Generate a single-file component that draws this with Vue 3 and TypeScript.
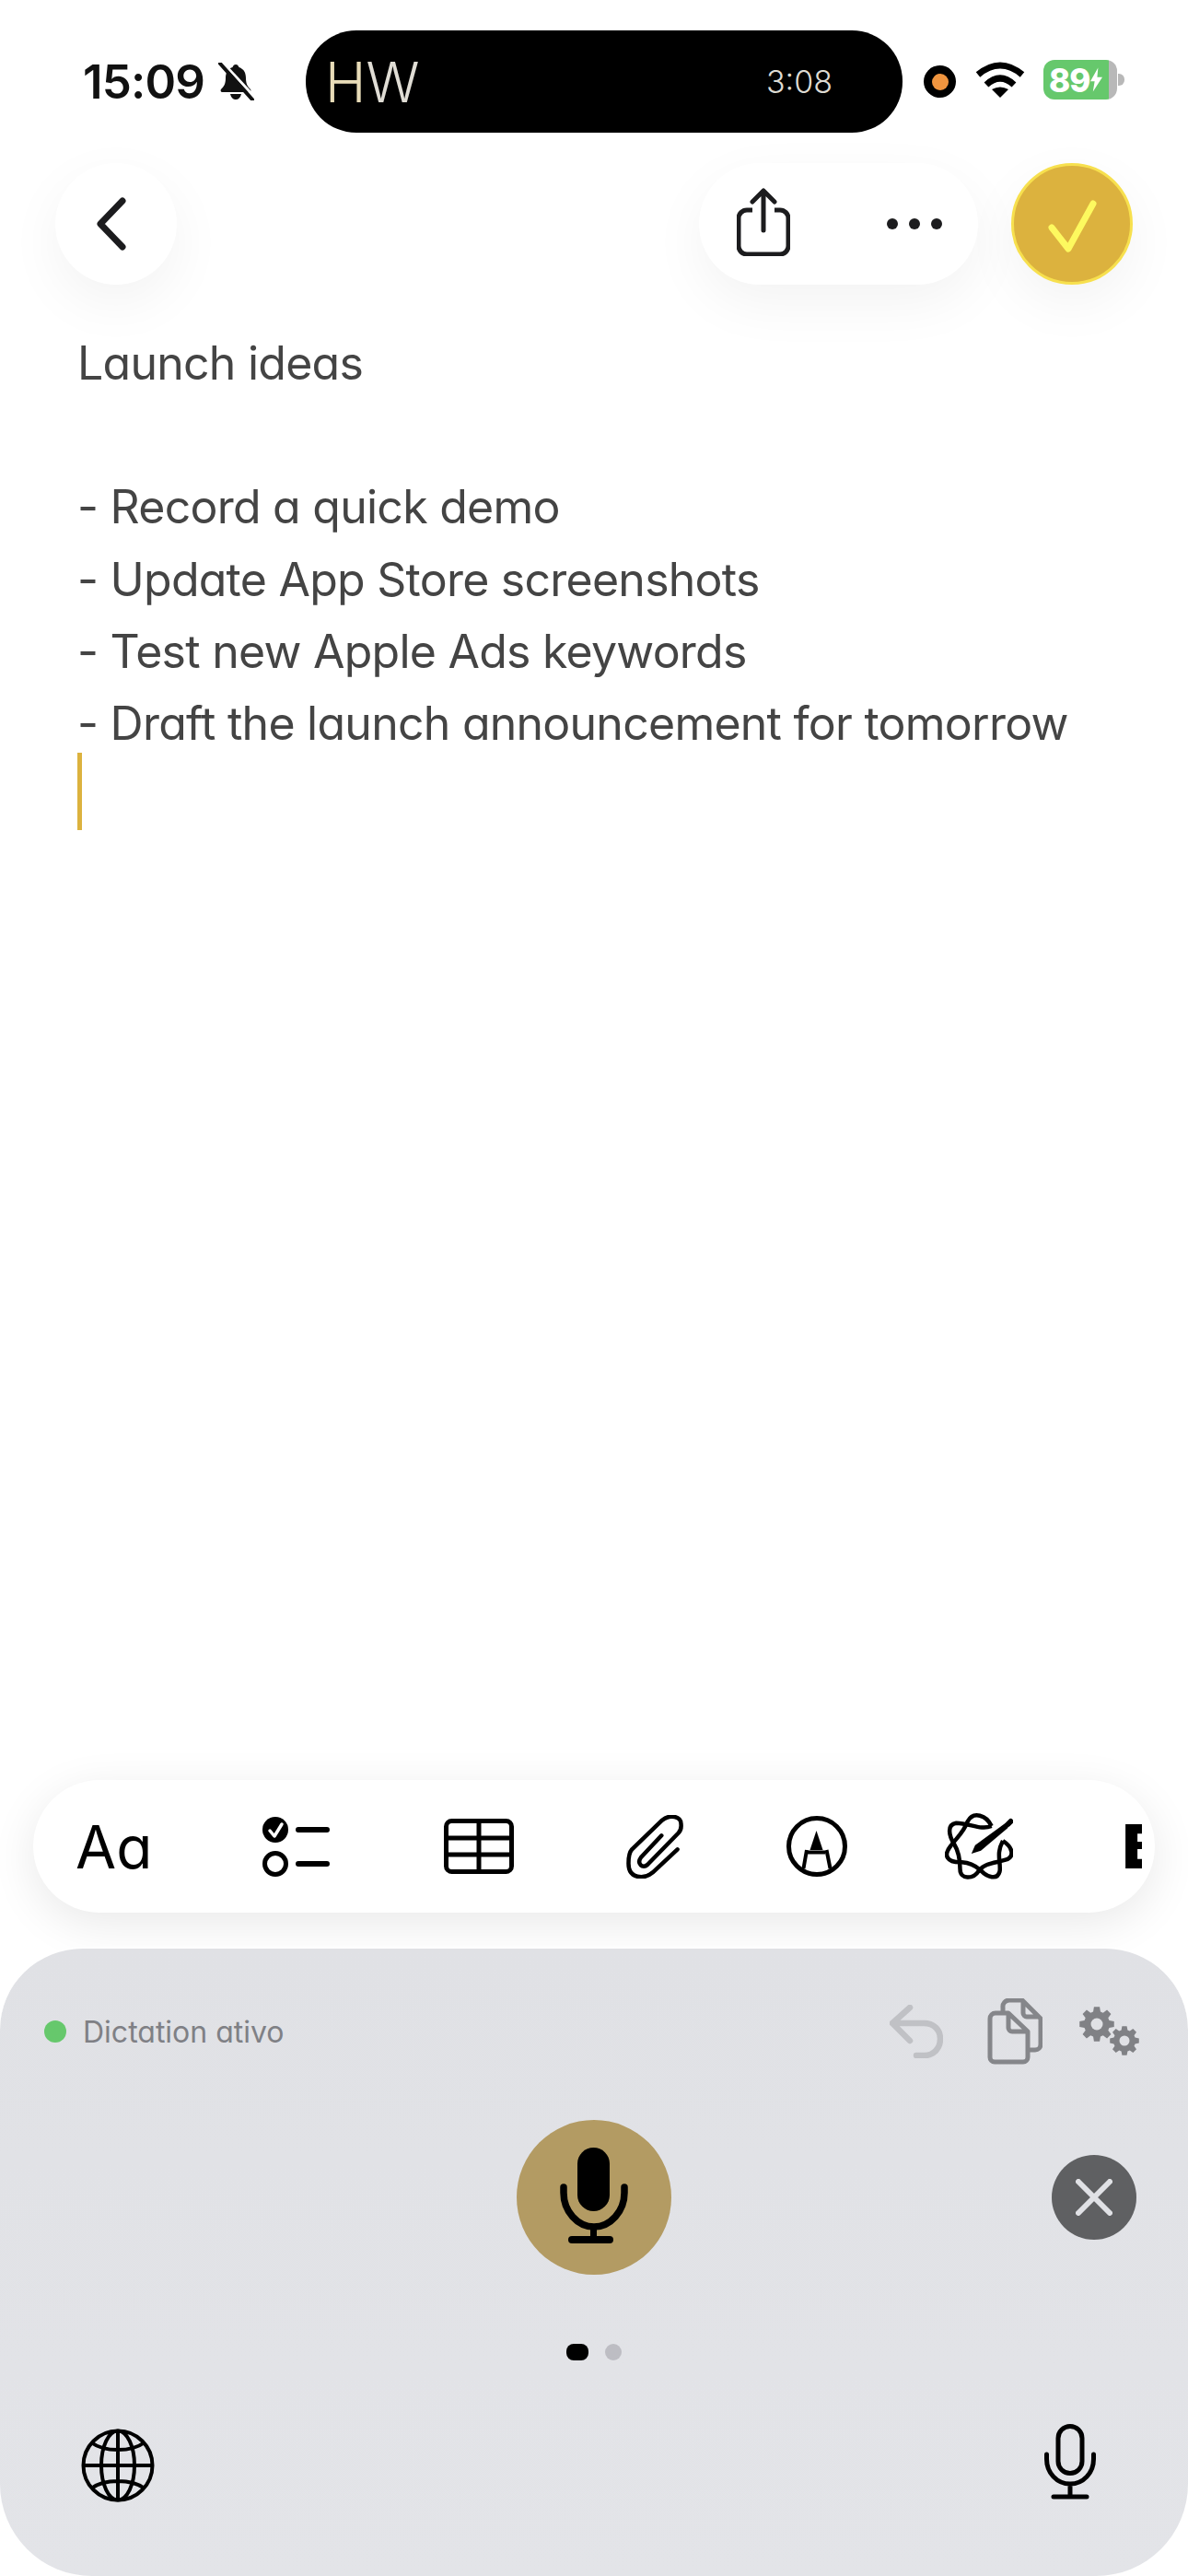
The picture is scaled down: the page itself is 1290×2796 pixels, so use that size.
<template>
  <div class="screen">
    <div class="status">
      <span class="time">15:09</span>
      <svg class="bell" viewBox="0 0 39 41">
        <path d="M19 2c-2 0-3 1.500-3.500 3C10 7 8 11 8 17c0 6-2 9-5 12-1 1.500 0 3 1.500 3h29c1.500 0 2.500-1.500 1.500-3-3-3-5-6-5-12 0-6-2-10-7.500-12C22 3.500 21 2 19 2z" fill="#111" />
        <path d="M13 34h12c-1 4-3 6-6 6s-5-2-6-6z" fill="#111" />
        <path d="M6 1l35 38" stroke="#fff" stroke-width="3" />
        <path d="M2 1l35 39" stroke="#111" stroke-width="4" stroke-linecap="round" />
      </svg>
      <div class="island">
        <span class="island-title"><span class="first">H</span>W</span>
        <span class="island-time">3:08</span>
      </div>
      <div class="rec"><span class="rec-inner"></span></div>
      <svg class="wifi" viewBox="0 0 54 40">
        <path d="M3 15Q27-5 51 15" fill="none" stroke="#000" stroke-width="7" />
        <path d="M12 26Q27 12 42 26" fill="none" stroke="#000" stroke-width="7" />
        <path d="M18 31Q27 26 36 31L27 40z" fill="#000" />
      </svg>
      <div class="battery" :style="{ background: batteryFill }">
        <span class="battery-num">89</span>
        <svg class="bolt" viewBox="0 0 14 28">
          <path d="M9 0L0 16h5L3 28l11-17H8z" fill="#fff" />
        </svg>
      </div>
      <span class="battery-nub"></span>
    </div>

    <div class="header">
      <button class="round back">
        <svg width="34" height="58" viewBox="0 0 34 58">
          <path d="M29 4L5 29l24 25" fill="none" stroke="#1c1c1e" stroke-width="7" stroke-linecap="round" stroke-linejoin="round" />
        </svg>
      </button>
      <div class="pill">
        <svg width="58" height="74" viewBox="0 0 58 74">
          <path d="M17 24h-6a9 9 0 0 0-9 9v30a9 9 0 0 0 9 9h36a9 9 0 0 0 9-9V33a9 9 0 0 0-9-9h-6" fill="none" stroke="#1c1c1e" stroke-width="5" />
          <path d="M29 46V4M17 15L29 3l12 12" fill="none" stroke="#1c1c1e" stroke-width="5" stroke-linecap="round" stroke-linejoin="round" />
        </svg>
        <div class="dots"><span></span><span></span><span></span></div>
      </div>
      <button class="round done">
        <svg width="62" height="62" viewBox="0 0 62 62">
          <path d="M10 35l18 23L55 9" fill="none" stroke="#fdf95f" stroke-width="7" stroke-linecap="round" stroke-linejoin="round" />
        </svg>
      </button>
    </div>

    <div class="note">
      <div v-for="(line, i) in noteLines" :key="i" class="note-line">{{ line }}</div>
      <div class="caret"></div>
    </div>

    <div class="toolbar">
      <span class="tool-aa">Aɑ</span>
      <svg class="tool-check" width="73" height="66" viewBox="0 0 73 66">
        <circle cx="14" cy="15" r="14" fill="#000" />
        <path d="M8 16l5 6 8-13" fill="none" stroke="#fff" stroke-width="3.500" stroke-linecap="round" stroke-linejoin="round" />
        <circle cx="14" cy="52" r="11.500" fill="none" stroke="#000" stroke-width="5" />
        <path d="M39 15h31M39 52h31" stroke="#000" stroke-width="6" stroke-linecap="round" />
      </svg>
      <svg class="tool-table" width="76" height="60" viewBox="0 0 76 60">
        <rect x="2.500" y="2.500" width="71" height="55" rx="6" fill="none" stroke="#000" stroke-width="5" />
        <path d="M2 21h72M2 39h72M38 2v56" stroke="#000" stroke-width="5" />
      </svg>
      <svg class="tool-clip" width="62" height="69" viewBox="0 0 62 69">
        <path d="M55.600 37.300L28.800 62.300C20 70 2 70 2.500 52C2.500 46 3 41 6.200 37.300L39 5.700C47-1 60 1 59.500 10C60 14 59 17 56.700 19.500L23 54C18 58.500 11 53 16 46L38.300 22.300" fill="none" stroke="#000" stroke-width="4.500" stroke-linecap="round" stroke-linejoin="round" />
      </svg>
      <svg class="tool-pen" width="66" height="66" viewBox="0 0 66 66">
        <circle cx="33" cy="33" r="30.500" fill="none" stroke="#000" stroke-width="5" />
        <path d="M32.500 16L25.500 37h14z" fill="#000" />
        <path d="M22 37l-3.500 20M43.500 37l4 20M23 39.500h19" fill="none" stroke="#000" stroke-width="4" />
      </svg>
      <svg class="tool-write" width="74" height="72" viewBox="0 0 74 72">
        <path d="M50.600 14C45.300 2.300 30.900-2.700 24.700 9C20.600 20.700 12.300 27.300 6.200 35.700C-2 45.700 2 54 18.500 53.300C30.900 54 37 60.700 39.100 62.300C45.300 69 57.600 74 59.700 62.300C60.500 50.700 55.600 44 63 30" fill="none" stroke="#000" stroke-width="4.500" />
        <path d="M50.600 14C39.100 19 26.700 10.700 12.300 10.700C2 12.300 4.100 24 10.300 34C16.500 44 16.500 54 16.500 60.700C16.500 72.300 30.900 72.300 37 62.300C43.200 54 55.600 54 65.800 50.700C76.100 47.300 74 37.300 63 30" fill="none" stroke="#000" stroke-width="4.500" />
        <path d="M28.800 44L32.900 34.700L65.800 10.700L68.700 15.700L39.100 40.700z" fill="#000" />
        <path d="M68.500 12l3-3" stroke="#000" stroke-width="6" stroke-linecap="round" />
      </svg>
      <span class="tool-bold">B</span>
    </div>

    <div class="panel">
      <div class="panel-top">
        <span class="live-dot"></span>
        <span class="live-text">Dictation ativo</span>
        <svg class="undo" width="58" height="58" viewBox="0 0 58 58">
          <path d="M22 3L3 20l19 19M3 20h34c12 0 18 8 18 17 0 10-7 18-17 18h-9" fill="none" stroke="#c0c1c5" stroke-width="6.500" stroke-linecap="round" stroke-linejoin="round" />
        </svg>
        <svg class="copy" width="60" height="72" viewBox="0 0 60 72">
          <path d="M23 16H9a6 6 0 0 0-6 6v42a5 5 0 0 0 5 5h31a5 5 0 0 0 5-5V36zM23 16v16a4 4 0 0 0 4 4h17" fill="none" stroke="#85868a" stroke-width="5" stroke-linejoin="round" />
          <path d="M17 15v-5a7 7 0 0 1 7-8h14l20 20v28a6 6 0 0 1-6 6h-7M39 3v13a4 4 0 0 0 4 4h14" fill="none" stroke="#85868a" stroke-width="5" stroke-linejoin="round" />
        </svg>
        <svg class="gears" width="66" height="54" viewBox="0 0 66 54">
          <path :d="gearPath(19, 19, 19, 14, 8)" fill="#808185" />
          <circle cx="19" cy="19" r="6.500" fill="#e0e1e5" />
          <path :d="gearPath(49, 37, 16, 12, 8)" fill="#808185" />
          <circle cx="49" cy="37" r="5.500" fill="#e0e1e5" />
        </svg>
      </div>

      <div class="mic-row">
        <div class="mic-round">
          <svg width="74" height="104" viewBox="0 0 74 104">
            <rect x="19" y="0" width="35" height="69" rx="17.500" fill="#000" />
            <path d="M4 43v6c0 20 15 37 33 37s33-17 33-37v-6" fill="none" stroke="#000" stroke-width="7.500" stroke-linecap="round" />
            <path d="M36.500 86v13" stroke="#000" stroke-width="7" />
            <path d="M13 100h41" stroke="#000" stroke-width="8" stroke-linecap="round" />
          </svg>
        </div>
        <button class="close">
          <svg width="40" height="40" viewBox="0 0 40 40">
            <path d="M3 3l34 34M37 3L3 37" stroke="#e0e1e5" stroke-width="6" stroke-linecap="round" />
          </svg>
        </button>
      </div>

      <div class="pager">
        <span class="page active"></span>
        <span class="page"></span>
      </div>

      <div class="panel-bottom">
        <svg class="globe" width="80" height="80" viewBox="0 0 80 80">
          <g fill="none" stroke="#000" stroke-width="4">
            <circle cx="40" cy="40" r="37.500" />
            <ellipse cx="40" cy="40" rx="18" ry="37.500" />
            <path d="M40 2v76M2 40h76M11 15c8 6 18 8 29 8s21-2 29-8M11 65c8-6 18-8 29-8s21 2 29 8" />
          </g>
        </svg>
        <svg width="56" height="82" viewBox="0 0 56 82">
          <rect x="15" y="2.500" width="26" height="51" rx="13" fill="none" stroke="#000" stroke-width="5" />
          <path d="M2.500 33v5c0 15 11 27 25.500 27s25.500-12 25.500-27v-5M28 65v14M10 79h36" fill="none" stroke="#000" stroke-width="5" stroke-linecap="round" />
        </svg>
      </div>
    </div>
  </div>
</template>

<script setup lang="ts">
const noteLines: string[] = [
  'Launch ideas',
  '',
  '- Record a quick demo',
  '- Update App Store screenshots',
  '- Test new Apple Ads keywords',
  '- Draft the launch announcement for tomorrow'
]

const batteryLevel = 89
const batteryFill = `linear-gradient(90deg, #66c86c ${batteryLevel}%, #b8b8b8 ${batteryLevel}%)`

// cog outline with rounded-ish teeth, used by the settings icon
function gearPath(cx: number, cy: number, outer: number, inner: number, teeth: number): string {
  const step = (Math.PI * 2) / teeth
  const pts: string[] = []
  for (let i = 0; i < teeth; i++) {
    const a = i * step
    const offsets: Array<[number, number]> = [
      [-0.28, inner],
      [-0.16, outer],
      [0.16, outer],
      [0.28, inner]
    ]
    for (const [k, r] of offsets) {
      const x = cx + r * Math.cos(a + k * step * 1.3)
      const y = cy + r * Math.sin(a + k * step * 1.3)
      pts.push(`${x.toFixed(2)} ${y.toFixed(2)}`)
    }
  }
  return `M${pts.join('L')}Z`
}
</script>

<style scoped>
.screen {
  width: 1290px;
  height: 2796px;
  display: flex;
  flex-direction: column;
  background: #fff;
  overflow: hidden;
  font-family: Inter, "Liberation Sans", sans-serif;
}

.status {
  display: flex;
  align-items: center;
  height: 111px;
  margin-top: 33px;
  padding-left: 90px;
}

.time {
  width: 132px;
  font-size: 51px;
  font-weight: 600;
  letter-spacing: -0.800px;
  color: #111;
  white-space: nowrap;
}

.bell {
  width: 39px;
  height: 41px;
  margin-left: 15px;
}

.island {
  width: 648px;
  height: 111px;
  margin-left: 56px;
  padding: 0 76px 0 21px;
  box-sizing: border-box;
  display: flex;
  align-items: center;
  justify-content: space-between;
  background: #000;
  border-radius: 55px;
}

.island-title {
  font-size: 60px;
  font-weight: 300;
  color: #e0ddd5;
}

.first {
  color: #e8dcb8;
}

.island-time {
  font-size: 34px;
  font-weight: 300;
  color: #dedbd3;
}

.rec {
  width: 35px;
  height: 35px;
  margin-left: 23px;
  display: flex;
  align-items: center;
  justify-content: center;
  background: #000;
  border-radius: 50%;
}

.rec-inner {
  width: 18px;
  height: 18px;
  background: #f0953f;
  border-radius: 50%;
}

.wifi {
  width: 54px;
  height: 40px;
  margin: -5px 0 0 21px;
}

.battery {
  width: 80px;
  height: 43px;
  margin: -4px 0 0 20px;
  padding-left: 6px;
  box-sizing: border-box;
  display: flex;
  align-items: center;
  gap: 1px;
  border-radius: 12px;
}

.battery-num {
  font-size: 35px;
  font-weight: 800;
  letter-spacing: -1px;
  color: #fff;
}

.bolt {
  width: 13px;
  height: 27px;
}

.battery-nub {
  width: 7px;
  height: 13px;
  margin: -4px 0 0 1px;
  background: #b8b8b8;
  border-radius: 0 6px 6px 0;
}

.header {
  display: flex;
  align-items: center;
  gap: 36px;
  margin-top: 33px;
  padding: 0 60px;
}

.round {
  width: 132px;
  height: 132px;
  padding: 0;
  display: flex;
  align-items: center;
  justify-content: center;
  border: none;
  border-radius: 50%;
  box-shadow: 0 20px 60px rgba(0, 0, 0, 0.05);
}

.back {
  margin-right: auto;
  background: #fff;
}

.back svg {
  margin-left: -10px;
}

.done {
  background: #dcb23e;
  border: 3px solid #f7e04e;
  box-sizing: border-box;
}

.done svg {
  margin-left: -3px;
}

.pill {
  width: 303px;
  height: 132px;
  padding: 0 39px 0 41px;
  box-sizing: border-box;
  display: flex;
  align-items: center;
  justify-content: space-between;
  background: #fff;
  border-radius: 66px;
  box-shadow: 0 20px 60px rgba(0, 0, 0, 0.05);
}

.pill svg {
  margin-top: -4px;
}

.dots {
  display: flex;
  gap: 12px;
}

.dots span {
  width: 12px;
  height: 12px;
  background: #1c1c1e;
  border-radius: 50%;
}

.note {
  flex: 1;
  margin-top: 46px;
  padding-left: 84px;
  font-size: 50px;
  font-feature-settings: "cv11";
  line-height: 78.2px;
  letter-spacing: -0.750px;
  color: #444;
}

.note-line {
  min-height: 78.2px;
  white-space: nowrap;
}

.caret {
  width: 5px;
  height: 84px;
  margin-top: -7px;
  background: #dcb23e;
}

.toolbar {
  height: 144px;
  margin: 0 36px 37px;
  padding-left: 46px;
  box-sizing: border-box;
  display: flex;
  align-items: center;
  background: #fff;
  border-radius: 72px;
  box-shadow: 0 12px 50px rgba(0, 0, 0, 0.09);
}

.tool-aa {
  width: 79px;
  font-size: 64px;
  font-weight: 400;
  color: #000;
  white-space: nowrap;
}

.tool-check { margin-left: 124px; }
.tool-table { margin-left: 124px; }
.tool-clip { margin-left: 122px; }
.tool-pen { margin-left: 112px; }
.tool-write { margin-left: 106px; }

.tool-bold {
  width: 21px;
  margin-left: 119px;
  overflow: hidden;
  font-size: 66px;
  font-weight: 900;
  color: #000;
}

.panel {
  height: 683px;
  box-sizing: border-box;
  background: linear-gradient(#e0e1e5, #e3e4e8);
  border-top: 2px solid #fff;
  border-radius: 90px 90px 100px 100px;
}

.panel-top {
  display: flex;
  align-items: center;
  height: 72px;
  margin-top: 54px;
  padding: 0 52px 0 48px;
}

.live-dot {
  width: 24px;
  height: 24px;
  background: #66c86c;
  border-radius: 50%;
}

.live-text {
  margin-left: 18px;
  font-size: 32px;
  font-feature-settings: "cv11";
  color: #7f8085;
}

.undo {
  margin-left: auto;
}

.copy {
  margin-left: 48px;
}

.gears {
  margin-left: 40px;
}

.mic-row {
  display: grid;
  grid-template-columns: 1fr auto 1fr;
  align-items: center;
  margin-top: 60px;
  padding-right: 56px;
}

.mic-round {
  grid-column: 2;
  width: 168px;
  height: 168px;
  margin-left: 56px;
  display: flex;
  align-items: center;
  justify-content: center;
  background: #b39b63;
  border-radius: 50%;
}

.mic-round svg {
  margin-top: -4px;
}

.close {
  grid-column: 3;
  justify-self: end;
  width: 92px;
  height: 92px;
  padding: 0;
  display: flex;
  align-items: center;
  justify-content: center;
  background: #5f6062;
  border: none;
  border-radius: 50%;
}

.pager {
  display: flex;
  justify-content: center;
  align-items: center;
  gap: 18px;
  margin-top: 75px;
}

.page {
  width: 18px;
  height: 18px;
  background: #bdbdc3;
  border-radius: 50%;
}

.page.active {
  width: 24px;
  background: #000;
  border-radius: 8px;
}

.panel-bottom {
  display: flex;
  justify-content: space-between;
  align-items: flex-start;
  margin-top: 69px;
  padding: 0 100px 0 88px;
}

.globe {
  margin-top: 5px;
}
</style>
